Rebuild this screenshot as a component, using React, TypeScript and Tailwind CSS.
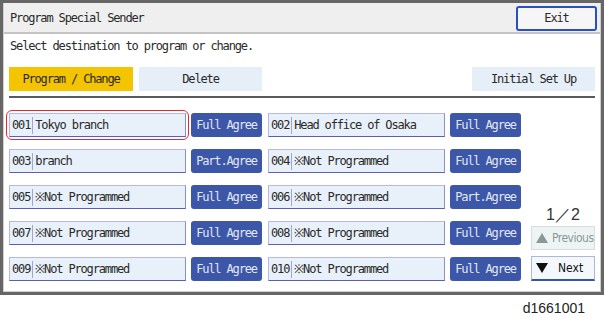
const mono = "font-['DejaVu_Sans_Mono','Liberation_Mono',monospace] text-[12px] tracking-[-1.15px]";

type Item = { no: string; name: string; agree: string };

const rows: Item[][] = [
  [
    { no: "001", name: "Tokyo branch", agree: "Full Agree" },
    { no: "002", name: "Head office of Osaka", agree: "Full Agree" },
  ],
  [
    { no: "003", name: "branch", agree: "Part.Agree" },
    { no: "004", name: "※Not Programmed", agree: "Full Agree" },
  ],
  [
    { no: "005", name: "※Not Programmed", agree: "Full Agree" },
    { no: "006", name: "※Not Programmed", agree: "Part.Agree" },
  ],
  [
    { no: "007", name: "※Not Programmed", agree: "Full Agree" },
    { no: "008", name: "※Not Programmed", agree: "Full Agree" },
  ],
  [
    { no: "009", name: "※Not Programmed", agree: "Full Agree" },
    { no: "010", name: "※Not Programmed", agree: "Full Agree" },
  ],
];

function Entry({ item, selected }: { item: Item; selected?: boolean }) {
  return (
    <div className="flex items-center gap-[5px]">
      <div className="relative flex h-[24px] w-[177px] items-center border border-[#b8b8e6] border-r-[#8c8cd2] border-b-[#5c5cba] bg-[#e8f0f9] pl-[2px] text-[#2a2a2a]">
        <span className={mono}>{item.no}</span>
        <span className="mx-[2px] h-[17px] w-px bg-[#a4a4cc]" />
        <span className={mono}>{item.name}</span>
        {selected && (
          <div className="absolute -inset-[4px] rounded-[6px] border-[1.5px] border-[#e02a38]" />
        )}
      </div>
      <div
        className={`flex h-[24px] w-[71px] items-center justify-center rounded-[3px] bg-[#3c56a8] text-[#e2e8f6] ${mono}`}
      >
        {item.agree}
      </div>
    </div>
  );
}

export default function App() {
  return (
    <div className="h-[318px] w-[605px] bg-white text-[#2a2a2a]">
      <div className="flex h-[295px] w-[604px] flex-col border-[3px] border-[#666]">
        <div className="flex flex-1 flex-col border border-[#cfcfcf] border-t-0">
          {/* title bar */}
          <div className="flex h-[31px] items-center justify-between border-b-2 border-[#c4c4c4] bg-[#efefef] pl-[6px] pr-[3px] pt-px">
            <span className={mono}>Program Special Sender</span>
            <div className={`flex h-[25px] w-[81px] items-center justify-center rounded-[3px] border-2 border-[#2a4fc0] bg-[#f6f6f6] ${mono}`}>
              Exit
            </div>
          </div>

          <div className="flex flex-col px-[5px]">
            <div className={`mt-[6px] pl-px leading-[12px] ${mono}`}>
              Select destination to program or change.
            </div>

            <div className="mt-[15px] flex h-[24px] items-stretch">
              <div className={`flex w-[124px] items-center justify-center bg-[#f5c400] ${mono}`}>
                Program / Change
              </div>
              <div className={`ml-[6px] flex w-[123px] items-center justify-center bg-[#e6eef8] ${mono}`}>
                Delete
              </div>
              <div className={`ml-auto flex w-[123px] items-center justify-center bg-[#e6eef8] ${mono}`}>
                Initial Set Up
              </div>
            </div>

            <div className="mt-[5px] h-[2px] bg-[#5a5a5a]" />

            <div className="mt-[15px] flex">
              <div className="flex flex-col gap-[12px]">
                {rows.map((r, i) => (
                  <div key={i} className="flex gap-[6px]">
                    <Entry item={r[0]} selected={i === 0} />
                    <Entry item={r[1]} />
                  </div>
                ))}
              </div>

              <div className="ml-[10px] flex w-[66px] flex-col justify-end">
                <div className="mb-[2px] text-center font-['Liberation_Sans',sans-serif] text-[16px] leading-[18px] text-[#333]">
                  1／2
                </div>
                <div className="flex h-[24px] items-center gap-[4px] border border-[#d4dede] bg-[#eef4f4] pl-[4px] font-['DejaVu_Sans_Condensed',sans-serif] text-[12px] tracking-[-0.5px] text-[#8c9898]">
                  <svg width="12" height="10" viewBox="0 0 12 10">
                    <path d="M6 0L12 10H0Z" fill="#8c9898" />
                  </svg>
                  <span>Previous</span>
                </div>
                <div className="mt-[6px] flex h-[25px] items-center border border-[#a8bad4] border-b-2 border-b-[#3456a6] bg-[#f4f8fc] pl-[4px] font-['DejaVu_Sans_Condensed',sans-serif] text-[12px] text-[#111]">
                  <svg width="12" height="10" viewBox="0 0 12 10">
                    <path d="M0 0H12L6 10Z" fill="#111" />
                  </svg>
                  <span className="ml-[10px]">Next</span>
                </div>
              </div>
            </div>
          </div>
        </div>
      </div>
      <div className="mt-[5px] flex justify-end pr-[20px] font-['Liberation_Sans',sans-serif] text-[14px] leading-[16px] text-[#222]">
        d1661001
      </div>
    </div>
  );
}
